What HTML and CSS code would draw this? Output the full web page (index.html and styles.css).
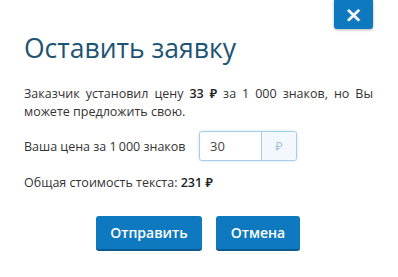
FILE: index.html
```html
<!DOCTYPE html>
<html lang="ru">
<head>
    <meta charset="UTF-8">
    <title>Оставить заявку</title>
    <link rel="stylesheet" href="styles.css">
</head>
<body>

<div class="modal">
    <button class="close" type="button">&times;</button>
    <h1>Оставить заявку</h1>

    <p class="intro">Заказчик установил цену <b>33&nbsp;₽</b> за 1&nbsp;000 знаков, но Вы можете предложить свою.</p>

    <div class="price-row">
        <label for="price">Ваша цена за 1&thinsp;000 знаков</label>
        <div class="input-group">
            <input id="price" type="text" value="30">
            <span class="addon">₽</span>
        </div>
    </div>

    <p class="total">Общая стоимость текста: <b>231&nbsp;₽</b></p>

    <div class="actions">
        <button class="btn" type="button">Отправить</button>
        <button class="btn" type="button">Отмена</button>
    </div>
</div>

</body>
</html>
```

FILE: styles.css
```css
body {
    margin: 0;
    background: #fff;
    font-family: "Open Sans", "Noto Sans", sans-serif;
    color: #333;
}
.modal {
    position: relative;
    width: 398px;
    height: 277px;
    box-sizing: border-box;
    padding: 30px 25px 0 24px;
}
.close {
    position: absolute;
    top: 0;
    left: 334px;
    width: 39px;
    height: 29px;
    border: 0;
    border-radius: 0 0 3px 3px;
    background: #0f79c0;
    color: #fff;
    font-family: "DejaVu Sans", sans-serif;
    font-size: 22px;
    font-weight: bold;
    line-height: 27px;
    padding: 0;
    box-shadow: 0 1px 3px rgba(0, 0, 0, 0.3);
}
h1 {
    margin: 0;
    font-size: 26.5px;
    font-weight: normal;
    color: #1d5474;
    line-height: 36px;
}
.intro {
    margin: 19px 0 0;
    font-size: 12.5px;
    line-height: 18px;
    text-align: justify;
}
.intro b, .total b {
    font-weight: 600;
    color: #222;
}
.price-row {
    display: flex;
    align-items: center;
    margin-top: 10px;
}
.price-row label {
    font-size: 12.5px;
    width: 175px;
}
.input-group {
    display: flex;
    height: 28px;
    border: 1px solid #a8cde6;
    border-radius: 3px;
    box-shadow: 0 0 3px rgba(102, 175, 233, 0.35);
}
.input-group input {
    width: 62px;
    box-sizing: border-box;
    border: 0;
    border-right: 1px solid #a8cde6;
    padding: 0 0 0 10px;
    font-family: inherit;
    font-size: 13px;
    color: #444;
    background: #fff;
    border-radius: 3px 0 0 3px;
    outline: none;
}
.addon {
    width: 34px;
    background: #f3f8fc;
    color: #a9c4d8;
    font-size: 13px;
    display: flex;
    align-items: center;
    justify-content: center;
    border-radius: 0 3px 3px 0;
}
.total {
    margin: 13px 0 0;
    font-size: 12.5px;
}
.actions {
    display: flex;
    justify-content: center;
    gap: 14px;
    margin-top: 25px;
    padding-right: 1px;
}
.btn {
    height: 35px;
    padding: 0 14px;
    border: 0;
    border-bottom: 2px solid #0a5a91;
    border-radius: 3px;
    background: #0f79c0;
    color: #fff;
    font-family: "Open Sans", sans-serif;
    font-size: 14px;
    font-weight: 600;
}
.btn:first-child {
    width: 106px;
}
.btn:last-child {
    width: 84px;
}
```
